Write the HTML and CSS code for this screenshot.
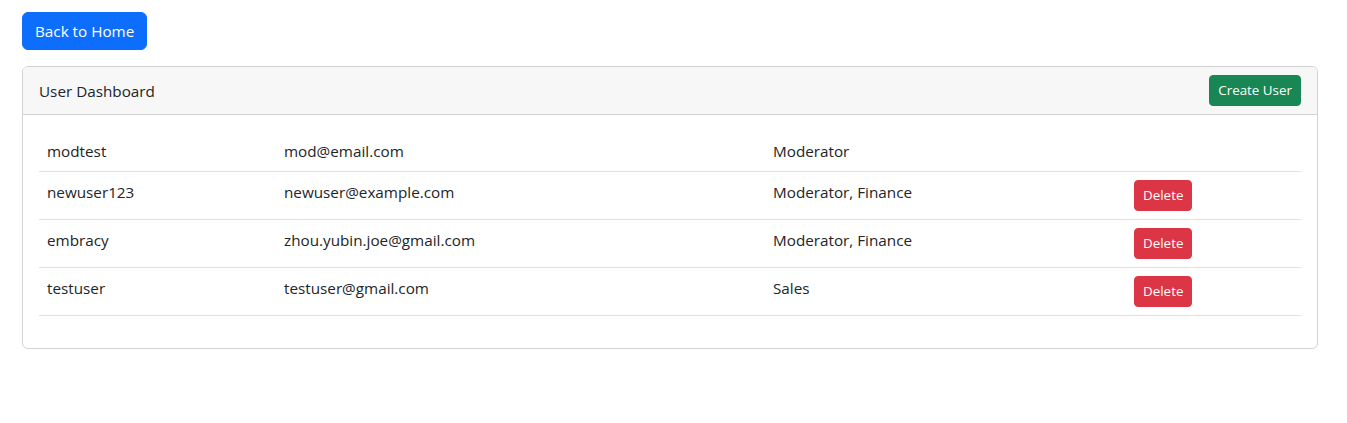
FILE: index.html
```html
<!DOCTYPE html>
<html lang="en">
<head>
<meta charset="utf-8">
<title>User Dashboard</title>
<link rel="stylesheet" href="styles.css">
</head>
<body>
<div class="page">
  <button class="btn btn-primary">Back to Home</button>
  <div class="card">
    <div class="card-header">
      <span>User Dashboard</span>
      <button class="btn btn-sm btn-success">Create User</button>
    </div>
    <div class="card-body">
      <table class="table">
        <colgroup>
          <col class="c1"><col class="c2"><col class="c3"><col class="c4">
        </colgroup>
        <tbody>
          <tr><td>modtest</td><td>mod@email.com</td><td>Moderator</td><td></td></tr>
          <tr><td>newuser123</td><td>newuser@example.com</td><td>Moderator, Finance</td><td><button class="btn btn-sm btn-danger">Delete</button></td></tr>
          <tr><td>embracy</td><td>zhou.yubin.joe@gmail.com</td><td>Moderator, Finance</td><td><button class="btn btn-sm btn-danger">Delete</button></td></tr>
          <tr><td>testuser</td><td>testuser@gmail.com</td><td>Sales</td><td><button class="btn btn-sm btn-danger">Delete</button></td></tr>
        </tbody>
      </table>
    </div>
  </div>
</div>
</body>
</html>
```

FILE: styles.css
```css
* { box-sizing: border-box; }
html, body { margin: 0; padding: 0; background: #fff; }
body {
  font-family: "Open Sans", "Noto Sans", "Liberation Sans", sans-serif;
  font-size: 15.25px;
  line-height: 24px;
  color: #212529;
}
.page {
  padding: 12px 29px 0 22px;
}
.btn {
  display: inline-block;
  font-family: inherit;
  font-size: 15.25px;
  line-height: 24px;
  padding: 6px 12px;
  border: 1px solid transparent;
  border-radius: 6px;
  cursor: pointer;
  color: #fff;
}
.btn-sm {
  font-size: 13.4px;
  line-height: 21px;
  padding: 4px 8px;
  border-radius: 4px;
}
.btn-primary { background: #0d6efd; border-color: #0d6efd; }
.btn-success { background: #198754; border-color: #198754; }
.btn-danger { background: #dc3545; border-color: #dc3545; }
.card {
  margin-top: 16px;
  border: 1px solid #d3d3d4;
  border-radius: 6px;
  overflow: hidden;
}
.card-header {
  display: flex;
  justify-content: space-between;
  align-items: center;
  padding: 8px 16px;
  background: #f7f7f7;
  border-bottom: 1px solid #d3d3d4;
}
.card-body {
  padding: 16px;
}
.table {
  width: 100%;
  border-collapse: collapse;
  margin-bottom: 16px;
  table-layout: fixed;
}
.table td {
  padding: 8px;
  border-bottom: 1px solid #dee2e6;
  vertical-align: top;
}
.table td span { display: inline-block; }
.c1 { width: 237px; }
.c2 { width: 489px; }
.c3 { width: 361px; }
.c4 { width: auto; }
```
